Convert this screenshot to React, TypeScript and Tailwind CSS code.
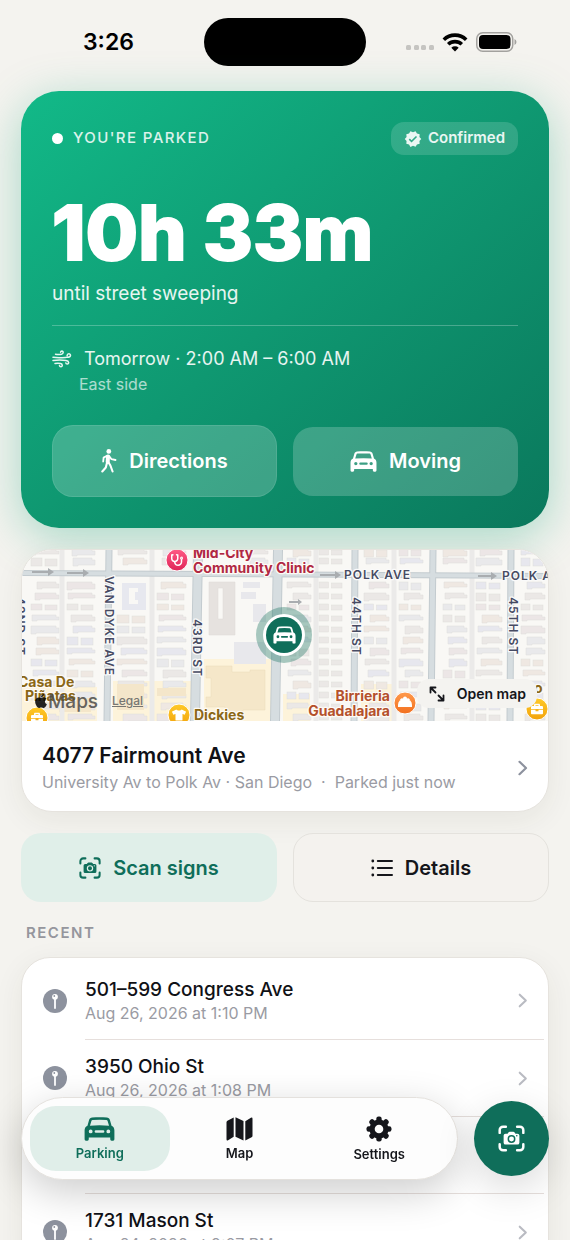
import React from "react";
import { FaApple, FaBriefcase, FaStethoscope, FaTshirt } from "react-icons/fa";
import { MdVerified } from "react-icons/md";

interface IconProps {
  className?: string;
}

interface RecentItem {
  title: string;
  date: string;
}

const recent: RecentItem[] = [
  { title: "501–599 Congress Ave", date: "Aug 26, 2026 at 1:10 PM" },
  { title: "3950 Ohio St", date: "Aug 26, 2026 at 1:08 PM" },
  { title: "", date: "" },
  { title: "1731 Mason St", date: "Aug 24, 2026 at 9:07 PM" },
];

const CarIcon = ({ className }: IconProps) => (
  <svg viewBox="0 0 26 20" className={className} fill="currentColor">
    <path
      fillRule="evenodd"
      d="M4.200 2.600C4.600 1.200 5.600.5 6.900.4c4-.4 8.200-.4 12.200 0 1.300.1 2.300.8 2.700 2.200l1.300 4.600c1.600.8 2.400 2 2.400 4v7.500q0 1.100-1.100 1.100h-1.300q-1.100 0-1.100-1.100V17.200H4v1.500q0 1.100-1.100 1.100H1.600q-1.100 0-1.100-1.100v-7.500c0-2 .8-3.200 2.400-4zM6.200 3.300 5 7.200Q13 6.500 21 7.200L19.800 3.300q-.2-.8-1-.9-5.800-.4-11.600 0-.8.1-1 .9zM5.600 10.400a1.600 1.600 0 1 0 0 3.200 1.600 1.600 0 0 0 0-3.200zM20.400 10.400a1.600 1.600 0 1 0 0 3.200 1.600 1.600 0 0 0 0-3.200zM10 11a1.100 1.100 0 0 0 0 2.200h6A1.100 1.100 0 0 0 16 11z"
    />
  </svg>
);

const WalkIcon = ({ className }: IconProps) => (
  <svg
    viewBox="0 0 16 24"
    className={className}
    fill="none"
    stroke="currentColor"
    strokeLinecap="round"
    strokeLinejoin="round"
  >
    <circle cx="7.800" cy="2.400" r="2.400" fill="currentColor" stroke="none" />
    <path d="M7 7.500 6.700 13" strokeWidth="4" />
    <path d="M6 6.800 2.600 8.600 2.200 12.500M8.300 7.200l2.200 3 4 .8" strokeWidth="1.800" />
    <path d="M7.600 13.500l1.800 3 2.200 6M5.800 14.500l-1 4L1.300 22.500" strokeWidth="2.100" />
  </svg>
);

const MapIcon = ({ className }: IconProps) => (
  <svg viewBox="0 0 27 24" className={className} fill="currentColor">
    <path d="M.5 5.200q0-1 .9-1.500L7.700.4v19.300l-5.600 3.500q-1.600.7-1.600-1zM9.500.2l8 3.700v19.600l-8-3.700zM19.300 4.200 24.900.8q1.600-.7 1.600 1v17q0 1-.9 1.500l-6.300 3.300z" />
  </svg>
);

const ScanIcon = ({ className }: IconProps) => (
  <svg viewBox="0 0 24 24" className={className} fill="none">
    <path
      d="M1.500 7V4.500a3 3 0 0 1 3-3H7M17 1.500h2.500a3 3 0 0 1 3 3V7M22.500 17v2.500a3 3 0 0 1-3 3H17M7 22.500H4.500a3 3 0 0 1-3-3V17"
      stroke="currentColor"
      strokeWidth="2.200"
      strokeLinecap="round"
    />
    <path
      fill="currentColor"
      fillRule="evenodd"
      d="M6.700 7.700h1.800l.9-1.200q.3-.4.9-.4h3.400q.6 0 .9.400l.9 1.200h1.800q1.700 0 1.700 1.700v6.300q0 1.700-1.700 1.700H6.700Q5 17.400 5 15.700V9.400q0-1.700 1.700-1.700zM12 8.900a3.500 3.500 0 1 0 0 7 3.500 3.500 0 0 0 0-7zm0 1.300a2.200 2.200 0 1 1 0 4.400 2.200 2.200 0 0 1 0-4.400zm4.700-1.300a.7.700 0 1 0 0 1.400.7.700 0 0 0 0-1.400z"
    />
  </svg>
);

const WindIcon = ({ className }: IconProps) => (
  <svg
    viewBox="0 0 20 18"
    className={className}
    fill="none"
    stroke="currentColor"
    strokeWidth="1.500"
    strokeLinecap="round"
  >
    <path d="M3.500 4.200q3 .5 6 0c2.200-.4 2.100-3.100.4-3.100q-1.100.1-1.300 1.100" />
    <path d="M1 7.300q5 .8 12.500.1c2.300-.2 5 .1 5-2s-3.200-2.200-3.400.2" />
    <path d="M1 10.400q7-.7 13 0c3.400.5 3.200 3.600 1.200 3.700q-1.200 0-1.400-1.200" />
    <path d="M3 13.400q3-.4 5.500 0c2.400.4 2.200 3.400.4 3.400q-1.200 0-1.400-1.200" />
  </svg>
);

const GearIcon = ({ className }: IconProps) => (
  <svg viewBox="0 0 26 26" className={className} fill="currentColor">
    {[0, 45, 90, 135].map((angle) => (
      <rect
        key={angle}
        x="10.300"
        y="0.500"
        width="5.400"
        height="25"
        rx="2.200"
        transform={`rotate(${angle} 13 13)`}
      />
    ))}
    <circle cx="13" cy="13" r="9.600" />
    <circle cx="13" cy="13" r="4.300" fill="#fdfdfd" />
  </svg>
);

const ListIcon = ({ className }: IconProps) => (
  <svg
    viewBox="0 0 22 18"
    className={className}
    fill="none"
    stroke="currentColor"
    strokeWidth="2"
    strokeLinecap="round"
  >
    <path d="M6.800 2H21M6.800 9H21M6.800 16H21" />
    <path d="M1.800 2h.01M1.800 9h.01M1.800 16h.01" strokeWidth="2.800" />
  </svg>
);

const Chevron = ({ className }: IconProps) => (
  <svg
    viewBox="0 0 10 16"
    className={className}
    fill="none"
    stroke="currentColor"
    strokeWidth="2.200"
    strokeLinecap="round"
    strokeLinejoin="round"
  >
    <path d="M1.500 1.800 8 8l-6.500 6.200" />
  </svg>
);

const PinIcon = () => (
  <svg viewBox="0 0 24 24" className="h-6 w-6 shrink-0">
    <circle cx="12" cy="12" r="12" fill="#8d929e" />
    <path d="M12 8v11" stroke="#fff" strokeWidth="1.800" strokeLinecap="round" />
    <circle cx="12" cy="7.800" r="2.900" fill="#fff" />
    <circle cx="11.300" cy="7" r="0.900" fill="#8d929e" />
  </svg>
);

const StatusBar = () => (
  <header className="grid h-[91px] grid-cols-[1fr_162px_1fr] items-start px-[21px] pt-[18px]">
    <span className="flex h-12 items-center justify-center pr-2 text-[23px] font-semibold text-black">
      3:26
    </span>
    <span className="h-12 rounded-full bg-black" />
    <div className="flex h-12 items-center justify-end gap-2 pr-8">
      <svg viewBox="0 0 28 20" className="h-5 w-7" fill="#c5c4c1">
        {[0, 8, 15, 23].map((x) => (
          <rect key={x} x={x} y="13" width="5" height="5" rx="1.500" />
        ))}
      </svg>
      <svg viewBox="0 0 26 20" className="h-5 w-[26px]">
        <path d="M13 19.500 9.300 15.700a5.400 5.400 0 0 1 7.400 0z" />
        <path
          d="M6.200 12.300a10 10 0 0 1 13.600 0M1.800 7.700a16 16 0 0 1 22.400 0"
          fill="none"
          stroke="#000"
          strokeWidth="3.600"
        />
      </svg>
      <svg viewBox="0 0 41 20" className="h-5 w-[41px]">
        <rect
          x="0.750"
          y="0.750"
          width="36"
          height="18.500"
          rx="6"
          fill="none"
          stroke="#a3a29f"
          strokeWidth="1.500"
        />
        <rect x="3" y="3" width="31.500" height="14" rx="4" />
        <path d="M38.500 7v6q2-.8 2-3t-2-3z" fill="#a3a29f" />
      </svg>
    </div>
  </header>
);

const ParkedCard = () => (
  <section className="rounded-[38px] bg-linear-to-br from-[#12b988] via-[#0f9871] to-[#0a785c] p-[31px] text-white shadow-[0_10px_46px_rgba(15,165,120,0.34)]">
    <div className="flex items-center justify-between">
      <p className="flex items-center gap-[10px] text-[15px] font-medium tracking-[1.4px] text-white/85">
        <span className="h-[11px] w-[11px] rounded-full bg-white" />
        YOU'RE PARKED
      </p>
      <span className="flex h-[33px] items-center gap-[6px] rounded-[13px] bg-white/15 px-[13px] text-[15px] font-semibold text-white/90">
        <MdVerified className="h-[18px] w-[18px]" />
        Confirmed
      </span>
    </div>
    <h1 className="mt-[37px] text-[76px] leading-[80px] font-extrabold [-webkit-text-stroke:2px_white]">
      10h 33m
    </h1>
    <p className="mt-[10px] text-[19px] leading-6 text-white/90">
      until street sweeping
    </p>
    <hr className="mt-[19px] border-white/25" />
    <p className="mt-[21px] flex items-center gap-3 text-[18px] leading-6 text-white/90">
      <WindIcon className="h-[18px] w-5" />
      Tomorrow · 2:00 AM – 6:00 AM
    </p>
    <p className="mt-[3px] pl-[27px] text-[16px] leading-5 text-white/65">
      East side
    </p>
    <div className="mt-[31px] grid grid-cols-2 items-center gap-4 text-[20px] font-semibold">
      <button className="flex h-[72px] items-center justify-center gap-3 rounded-[21px] border border-white/10 bg-white/20">
        <WalkIcon className="h-6 w-4" />
        Directions
      </button>
      <button className="flex h-[69px] items-center justify-center gap-3 rounded-[20px] bg-white/20">
        <CarIcon className="h-[21px] w-[27px]" />
        Moving
      </button>
    </div>
  </section>
);

// left edge and width of every column of houses
const houseColumns = [
  [10, 28],
  [46, 28],
  [96, 30],
  [136, 29],
  [225, 22],
  [266, 24],
  [298, 25],
  [343, 25],
  [378, 24],
  [422, 24],
  [455, 26],
  [500, 24],
];
const houseColors = ["#ebe8e6", "#e7e7ee", "#efe8e2", "#e9e9eb", "#ece6e6"];

const Houses = () => (
  <g stroke="#dfddda" strokeWidth="0.500">
    {houseColumns.map(([x, w], col) =>
      Array.from({ length: 15 }, (_, row) => {
        const seed = (col * 7 + row * 5 + col * row) % 11;
        const y = row < 2 ? row * 9 - 1 : 32 + (row - 2) * 11;
        const height = 6 + (seed % 3);
        const inset = (seed * 3) % 8;
        const fill = houseColors[(seed + col) % 5];
        if (seed % 4 === 1) {
          return (
            <g key={`${col}-${row}`} fill={fill}>
              <rect x={x} y={y} width={w / 2 - 3} height={height} />
              <rect x={x + w / 2} y={y + 1} width={w / 2 - 2} height={height - 1} />
            </g>
          );
        }
        return (
          <path
            key={`${col}-${row}`}
            d={`M${x + inset} ${y}h${w - inset - 3}v2h3v${height - 3}h-${w - inset - 5}v1h-5z`}
            fill={fill}
          />
        );
      })
    )}
  </g>
);

const StreetMap = () => (
  <svg
    viewBox="0 0 528 171"
    preserveAspectRatio="xMidYMid slice"
    className="block h-[171px] w-full"
    fontFamily="Inter, sans-serif"
  >
    <defs>
      <linearGradient id="gold" x2="0" y2="1">
        <stop stopColor="#ffca28" />
        <stop offset="1" stopColor="#f2a20c" />
      </linearGradient>
      <linearGradient id="pink" x2="0" y2="1">
        <stop stopColor="#ff5c86" />
        <stop offset="1" stopColor="#df2457" />
      </linearGradient>
      <linearGradient id="orange" x2="0" y2="1">
        <stop stopColor="#ff9a4d" />
        <stop offset="1" stopColor="#f2701f" />
      </linearGradient>
    </defs>
    <rect width="528" height="171" fill="#f9f8f5" />
    <g fill="#fdf3da">
      <path d="M0 137h76v34H0zM92 131h78v40H92zM183 109h68v62h-68zM262 144h27v27h-27zM340 134h33v37h-33z" />
    </g>
    <Houses />
    <g fill="#f9f8f5">
      <rect x="92" y="30" width="36" height="31" />
      <rect x="183" y="29" width="68" height="80" />
    </g>
    <path d="M183 109h68v62h-68z" fill="#fdf3da" />
    <path
      d="M101 33h24v27h-24zM108 38v16h9v-4h-3v-8h3v-4z"
      fill="#e7e8ef"
      fillRule="evenodd"
    />
    <path
      d="M188 32h26v53h-26zM197 38v31h5V38z"
      fill="#e6e2df"
      stroke="#dcd8d4"
      strokeWidth="0.500"
      fillRule="evenodd"
    />
    <g fill="#e8e8ec">
      <path d="M222 32h17v6h-17zM220 42h15v7h-15zM232 54h13v18h-13zM213 92h32v22h-32z" />
    </g>
    <path
      d="M185 116h26v6h18v-2h15v40h-22v3h-18v-6h-19v-10h5v-19h-5z"
      fill="#f5e7c9"
      stroke="#ead9b8"
      strokeWidth="0.500"
    />
    <path
      d="M96 134h27v26H96zM136 138h29v8h-29zM38 148h32v14H38z"
      fill="#f4e6ca"
    />
    <g stroke="#ebeae9" strokeWidth="5">
      <path d="M41 0v171M131 0v171M295 0v171M373 0v171M451 0v171" />
    </g>
    <g fill="none" stroke="#c3cbcf">
      <path d="M0 23l528 3" strokeWidth="6" />
      <path d="M88 0l-2 171M334 0l-1 171M412 0l-2 171M490 0l-1 171" strokeWidth="7" />
      <path d="M177 0l-3 171M257 0l-3 171" strokeWidth="10" />
    </g>
    <g fill="none" stroke="#d6dde0">
      <path d="M0 23l528 3" strokeWidth="4" />
      <path d="M88 0l-2 171M334 0l-1 171M412 0l-2 171M490 0l-1 171" strokeWidth="5" />
      <path d="M177 0l-3 171M257 0l-3 171" strokeWidth="8" />
    </g>
    <g fill="#a9adb0">
      <path d="M11 21h16v-3l6 4-6 4v-3H11zM46 22h16v-3l6 4-6 4v-3H46zM299 24h15v-3l6 4-6 4v-3h-15zM457 25h13v-3l6 4-6 4v-3h-13zM268 51h9v-2l4 3-4 3v-2h-9z" />
    </g>

    <g
      fontSize="12"
      fontWeight="600"
      fill="#474b63"
      stroke="#fafafa"
      strokeWidth="2.500"
      strokeLinejoin="round"
      paintOrder="stroke"
      letterSpacing="1"
    >
      <text x="323" y="29">
        POLK AVE
      </text>
      <text x="481" y="30">
        POLK AVE
      </text>
      <text transform="translate(84 26) rotate(90)">VAN DYKE AVE</text>
      <text transform="translate(172 69) rotate(90)">43RD ST</text>
      <text transform="translate(331 47) rotate(90)">44TH ST</text>
      <text transform="translate(488 47) rotate(90)">45TH ST</text>
      <text transform="translate(-5 47) rotate(90)">42ND ST</text>
    </g>

    <g
      fontSize="14"
      fontWeight="700"
      stroke="#fdfaf5"
      strokeWidth="2.500"
      strokeLinejoin="round"
      paintOrder="stroke"
    >
      <g fill="#b02843">
        <text x="172" y="8">
          Mid-City
        </text>
        <text x="172" y="23">
          Community Clinic
        </text>
      </g>
      <g fill="#8b6716">
        <text x="-3" y="137">
          Casa De
        </text>
        <text x="4" y="151">
          Piñatas
        </text>
        <text x="173" y="170">
          Dickies
        </text>
        <text x="513" y="143">
          o
        </text>
      </g>
      <g fill="#b4502b" textAnchor="end">
        <text x="369" y="151">
          Birrieria
        </text>
        <text x="369" y="166">
          Guadalajara
        </text>
      </g>
    </g>

    <g stroke="#fff" strokeWidth="1">
      <circle cx="156" cy="10" r="11" fill="url(#pink)" />
      <circle cx="16" cy="168" r="11" fill="url(#gold)" />
      <circle cx="158" cy="165" r="11" fill="url(#gold)" />
      <circle cx="516" cy="159" r="11" fill="url(#gold)" />
      <circle cx="384" cy="153" r="11" fill="url(#orange)" />
    </g>
    <g color="#fff">
      <FaStethoscope x="150" y="4" size="12" />
      <FaBriefcase x="10" y="162" size="12" />
      <FaTshirt x="151" y="158" size="14" />
      <FaBriefcase x="510" y="153" size="12" />
      <path
        d="M377 157v-2q0-6 7-6t7 6v2zM379 150a2 2 0 0 1 3-1.500 2 2 0 0 1 4 0 2 2 0 0 1 3 1.500z"
        fill="#fff"
      />
    </g>

    <g fill="#4d4c4a" opacity="0.850">
      <FaApple x="12" y="143" size="16" />
      <text x="27" y="158" fontSize="19" fontWeight="500">
        Maps
      </text>
    </g>

    <circle cx="263" cy="85" r="28" fill="#0f6e5a" opacity="0.350" />
    <circle cx="263" cy="85" r="21" fill="#fff" />
    <circle cx="263" cy="85" r="18" fill="#0f6e5a" />
    <svg x="252" y="76" width="23" height="18" color="#fff" viewBox="0 0 26 20">
      <CarIcon />
    </svg>
  </svg>
);

const MapCard = () => (
  <section className="overflow-hidden rounded-[31px] border border-[#e6e3de] bg-white shadow-[0_8px_30px_rgba(60,50,30,0.07)]">
    <div className="relative">
      <StreetMap />
      <a
        href="#legal"
        className="absolute bottom-3 left-[90px] text-[12px] leading-4 font-medium text-[#777672] underline"
      >
        Legal
      </a>
      <button className="absolute right-[11px] bottom-[13px] flex h-[29px] items-center gap-3 rounded-[12px] bg-[#f4f3f0] pr-[11px] pl-3 text-[14px] font-semibold text-[#15161b]">
        <svg
          viewBox="0 0 16 16"
          className="h-4 w-4"
          fill="none"
          stroke="currentColor"
          strokeWidth="1.800"
          strokeLinecap="round"
          strokeLinejoin="round"
        >
          <path d="M1.500 6.500v-5h5M1.500 1.500l5 5M14.500 9.500v5h-5M14.500 14.500l-5-5" />
        </svg>
        Open map
      </button>
    </div>
    <button className="flex h-[90px] w-full items-center justify-between px-5 pt-[3px] text-left">
      <span>
        <span className="block text-[21px] leading-7 font-semibold text-[#101116]">
          4077 Fairmount Ave
        </span>
        <span className="block text-[16px] leading-6 whitespace-pre text-[#9a9ba3]">
          University Av to Polk Av · San Diego {" · "} Parked just now
        </span>
      </span>
      <Chevron className="h-4 w-[10px] text-[#8d929e]" />
    </button>
  </section>
);

const RecentList = () => (
  <section>
    <h2 className="pl-[5px] text-[15px] leading-5 font-semibold tracking-[1.5px] text-[#95969d]">
      RECENT
    </h2>
    <ul className="mt-[14px] rounded-[29px] border border-[#e6e3de] bg-white pt-1 shadow-[0_8px_30px_rgba(60,50,30,0.07)]">
      {recent.map((item, index) => (
        <li key={index} className="flex items-stretch pl-[21px]">
          <span className="flex w-[42px] items-center">
            <PinIcon />
          </span>
          <button
            className={
              "mr-1 flex h-[77px] flex-1 items-center justify-between pr-4 text-left" +
              (index > 0 ? " border-t border-[#e6dfdc]" : "")
            }
          >
            <span>
              <span className="block text-[19px] leading-6 font-medium text-[#101116]">
                {item.title}
              </span>
              <span className="block text-[16px] leading-[22px] text-[#9a9ba3]">
                {item.date}
              </span>
            </span>
            <Chevron className="h-[15px] w-[10px] text-[#b9bbc2]" />
          </button>
        </li>
      ))}
    </ul>
  </section>
);

const TabBar = () => (
  <nav className="fixed inset-x-0 bottom-[60px] flex items-center gap-4 px-[21px]">
    <div className="grid h-[83px] flex-1 grid-cols-3 rounded-full border border-[#e4e1dd] bg-[#fdfdfd] p-2 text-[13px] leading-4 font-semibold text-[#15161b] shadow-[0_12px_40px_rgba(0,0,0,0.2)]">
      <button className="flex flex-col items-center justify-center gap-1 rounded-[26px] bg-[#e0eee9] text-[#0f6e5a]">
        <CarIcon className="h-6 w-[31px]" />
        Parking
      </button>
      <button className="flex flex-col items-center justify-center gap-1">
        <MapIcon className="h-6 w-[27px]" />
        Map
      </button>
      <button className="flex flex-col items-center justify-center gap-1">
        <GearIcon className="h-[26px] w-[26px]" />
        Settings
      </button>
    </div>
    <button
      aria-label="Scan signs"
      className="flex h-[75px] w-[75px] items-center justify-center rounded-full bg-[#0f6e5a] text-white shadow-[0_12px_40px_rgba(0,0,0,0.15)]"
    >
      <ScanIcon className="h-[27px] w-[27px]" />
    </button>
  </nav>
);

const App = () => {
  return (
    <div className="h-screen overflow-hidden bg-[#f4f3ef] font-['Inter',sans-serif]">
      <StatusBar />
      <main className="flex flex-col gap-[21px] px-[21px]">
        <ParkedCard />
        <MapCard />
        <div className="grid grid-cols-2 gap-4 text-[20px] font-semibold">
          <button className="flex h-[69px] items-center justify-center gap-3 rounded-[20px] bg-[#e0efe9] text-[#0f6e5a]">
            <ScanIcon className="h-[22px] w-[22px]" />
            Scan signs
          </button>
          <button className="flex h-[69px] items-center justify-center gap-3 rounded-[20px] border border-[#e4e2dd] bg-[#f4f2ee] text-[#15161b]">
            <ListIcon className="h-[18px] w-[22px]" />
            Details
          </button>
        </div>
        <RecentList />
      </main>
      <TabBar />
    </div>
  );
};

export default App;
